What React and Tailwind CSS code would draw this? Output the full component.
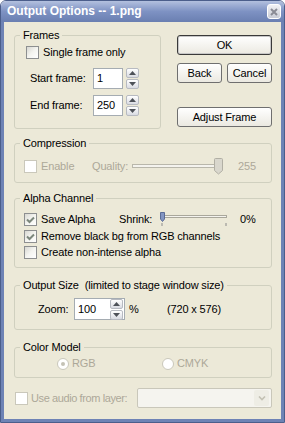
import clsx from "clsx";

function Check({ checked, disabled }) {
  return (
    <span
      className={clsx(
        "flex h-[13px] w-[13px] shrink-0 items-center justify-center border",
        disabled
          ? "border-[#cac8bb] bg-white"
          : "border-[#8d8f90] bg-linear-to-br from-[#d8d8d2] via-[#f4f4f0] to-white"
      )}
    >
      {checked && (
        <svg width="9" height="8" viewBox="0 0 9 8">
          <path d="M1 3.5 L3.5 6 L8 1.5" fill="none" stroke="#7c877c" strokeWidth="2" />
        </svg>
      )}
    </span>
  );
}

function Radio({ checked }) {
  return (
    <span className="flex h-[12px] w-[12px] shrink-0 items-center justify-center rounded-full border border-[#cac8bb] bg-white">
      {checked && <span className="h-[4px] w-[4px] rounded-full bg-[#c4c2b5]" />}
    </span>
  );
}

function Arrow({ down }) {
  return (
    <svg width="7" height="4" viewBox="0 0 7 4">
      <path d={down ? "M0 0 H7 L3.5 4 Z" : "M0 4 H7 L3.5 0 Z"} fill="#4d5158" />
    </svg>
  );
}

function Spin() {
  return (
    <div className="flex w-[13px] shrink-0 flex-col gap-[1px]">
      <span className="flex h-[10px] items-center justify-center rounded-[2px] border border-[#b7bac1] bg-linear-to-b from-white to-[#d9dbe2]">
        <Arrow />
      </span>
      <span className="flex h-[10px] items-center justify-center rounded-[2px] border border-[#b7bac1] bg-linear-to-b from-white to-[#d9dbe2]">
        <Arrow down />
      </span>
    </div>
  );
}

function Btn({ children, def, className }) {
  return (
    <div
      className={clsx(
        "flex h-[20px] items-center justify-center rounded-[3px] border bg-linear-to-b from-white to-[#ebe9e1]",
        def ? "border-[#3a3a3a] shadow-[inset_0_0_0_1px_#c7c7c7]" : "border-[#6f6f6f]",
        className
      )}
    >
      {children}
    </div>
  );
}

// group box: legend sits on the top border, body padding goes on the inner div
function Group({ title, className, inner, children }) {
  return (
    <fieldset className={clsx("rounded-[3px] border border-[#d0d0bf]", className)}>
      <legend className="ml-[5px] whitespace-pre px-[3px]">{title}</legend>
      <div className={inner}>{children}</div>
    </fieldset>
  );
}

export default function App() {
  return (
    <div className="flex h-[423px] w-[285px] flex-col overflow-hidden rounded-t-[6px] border border-[#4b5e8b] font-['Liberation_Sans',Arial,sans-serif] text-[11px] leading-[13px] tracking-[-0.15px] text-black">
      <div className="flex h-[21px] shrink-0 items-center justify-between bg-linear-to-b from-[#b3c0de] via-[#7e92c3] to-[#6a7fb1] pl-[6px] pr-[3px]">
        <span className="text-[12px] font-bold tracking-[0px] text-white">Output Options -- 1.png</span>
        <span className="flex h-[15px] w-[14px] items-center justify-center rounded-[3px] border border-white bg-linear-to-b from-[#f2f2f5] to-[#c9ccd6]">
          <svg width="8" height="8" viewBox="0 0 8 8">
            <path d="M1 1 L7 7 M7 1 L1 7" stroke="#8a8b95" strokeWidth="2" />
          </svg>
        </span>
      </div>

      <div className="flex flex-1 flex-col border-x-3 border-b-3 border-[#6e83b5] bg-[#ece9d8] pl-[10px] pr-[9px] pt-[7px]">
        <div className="flex">
          <Group title="Frames" className="w-[147px]" inner="pb-[12px] pl-[11px] pt-[4px]">
            <div className="flex items-center gap-[4px]">
              <Check />
              <span>Single frame only</span>
            </div>
            <div className="ml-[4px] mt-[9px] flex h-[21px] items-center">
              <span className="w-[63px]">Start frame:</span>
              <div className="flex h-[21px] w-[30px] items-center border border-[#a5acb2] bg-white pl-[3px]">1</div>
              <div className="ml-[3px]"><Spin /></div>
            </div>
            <div className="ml-[4px] mt-[6px] flex h-[21px] items-center">
              <span className="w-[63px]">End frame:</span>
              <div className="flex h-[21px] w-[30px] items-center border border-[#a5acb2] bg-white pl-[3px]">250</div>
              <div className="ml-[3px]"><Spin /></div>
            </div>
          </Group>

          <div className="ml-auto mt-[6px] flex w-[95px] flex-col">
            <Btn def>OK</Btn>
            <div className="mt-[8px] flex justify-between">
              <Btn className="w-[45px]">Back</Btn>
              <Btn className="w-[45px]">Cancel</Btn>
            </div>
            <Btn className="mt-[24px]">Adjust Frame</Btn>
          </div>
        </div>

        <Group title="Compression" className="mt-[8px]" inner="pb-[8px] pl-[9px] pt-[8px]">
          <div className="flex h-[16px] items-center text-[#aca899]">
            <div className="flex w-[68px] items-center gap-[4px]">
              <Check disabled />
              <span>Enable</span>
            </div>
            <span className="w-[40px]">Quality:</span>
            <svg width="92" height="17" viewBox="0 0 92 17">
              <rect x="0.5" y="6.5" width="88" height="3" fill="#f4f3ee" stroke="#b9b7ab" />
              <path d="M82.5 1.5 Q82.5 0.5 83.5 0.5 H89.5 Q90.5 0.5 90.5 1.5 V12.5 L86.5 16 L82.5 12.5 Z" fill="#d9d7cd" stroke="#b1afa4" />
            </svg>
            <span className="ml-[14px]">255</span>
          </div>
        </Group>

        <Group title="Alpha Channel" className="mt-[9px]" inner="pb-[8px] pl-[9px] pt-[8px]">
          <div className="flex h-[13px] items-center">
            <div className="flex w-[95px] items-center gap-[4px]">
              <Check checked />
              <span>Save Alpha</span>
            </div>
            <span className="w-[40px]">Shrink:</span>
            <svg width="70" height="15" viewBox="0 0 70 15" className="shrink-0">
              <rect x="2.5" y="3.5" width="65" height="2" fill="#f4f3ee" stroke="#a9a79b" />
              <path d="M3 11 V14 M67 11 V14" stroke="#8a8a8a" />
              <path d="M1.5 0.5 H5.5 V7 L3.5 9.5 L1.5 7 Z" fill="#8395c2" stroke="#5b6c97" />
            </svg>
            <span className="ml-[11px]">0%</span>
          </div>
          <div className="mt-[4px] flex h-[13px] items-center gap-[4px]">
            <Check checked />
            <span>Remove black bg from RGB channels</span>
          </div>
          <div className="mt-[3px] flex h-[13px] items-center gap-[4px]">
            <Check />
            <span>Create non-intense alpha</span>
          </div>
        </Group>

        <Group title="Output Size  (limited to stage window size)" className="mt-[11px]" inner="pb-[9px] pl-[23px] pt-[6px]">
          <div className="flex h-[22px] items-center">
            <span className="w-[36px]">Zoom:</span>
            <div className="flex h-[22px] w-[51px] items-center justify-between border border-[#a5acb2] bg-white pl-[3px] pr-[1px]">
              <span>100</span>
              <Spin />
            </div>
            <span className="ml-[4px] w-[38px]">%</span>
            <span>(720 x 576)</span>
          </div>
        </Group>

        <Group title="Color Model" className="mt-[11px]" inner="pb-[7px] pl-[42px] pt-[3px]">
          <div className="flex h-[13px] items-center text-[#aca899]">
            <div className="flex w-[105px] items-center gap-[3px]">
              <Radio checked />
              <span>RGB</span>
            </div>
            <div className="flex items-center gap-[3px]">
              <Radio />
              <span>CMYK</span>
            </div>
          </div>
        </Group>

        <div className="mt-[10px] flex h-[20px] items-center text-[#aca899]">
          <div className="ml-[1px] flex items-center gap-[3px]">
            <Check disabled />
            <span className="tracking-[-0.4px]">Use audio from layer:</span>
          </div>
          <div className="ml-auto flex h-[20px] w-[135px] items-center justify-end rounded-[2px] border border-[#c9c7ba] bg-[#f5f4ef] pr-[2px]">
            <span className="flex h-[16px] w-[15px] items-center justify-center rounded-[2px] bg-[#eeede5]">
              <svg width="8" height="5" viewBox="0 0 8 5">
                <path d="M1 0.5 L4 3.5 L7 0.5" fill="none" stroke="#c3c1b4" strokeWidth="1.6" />
              </svg>
            </span>
          </div>
        </div>
      </div>
    </div>
  );
}
